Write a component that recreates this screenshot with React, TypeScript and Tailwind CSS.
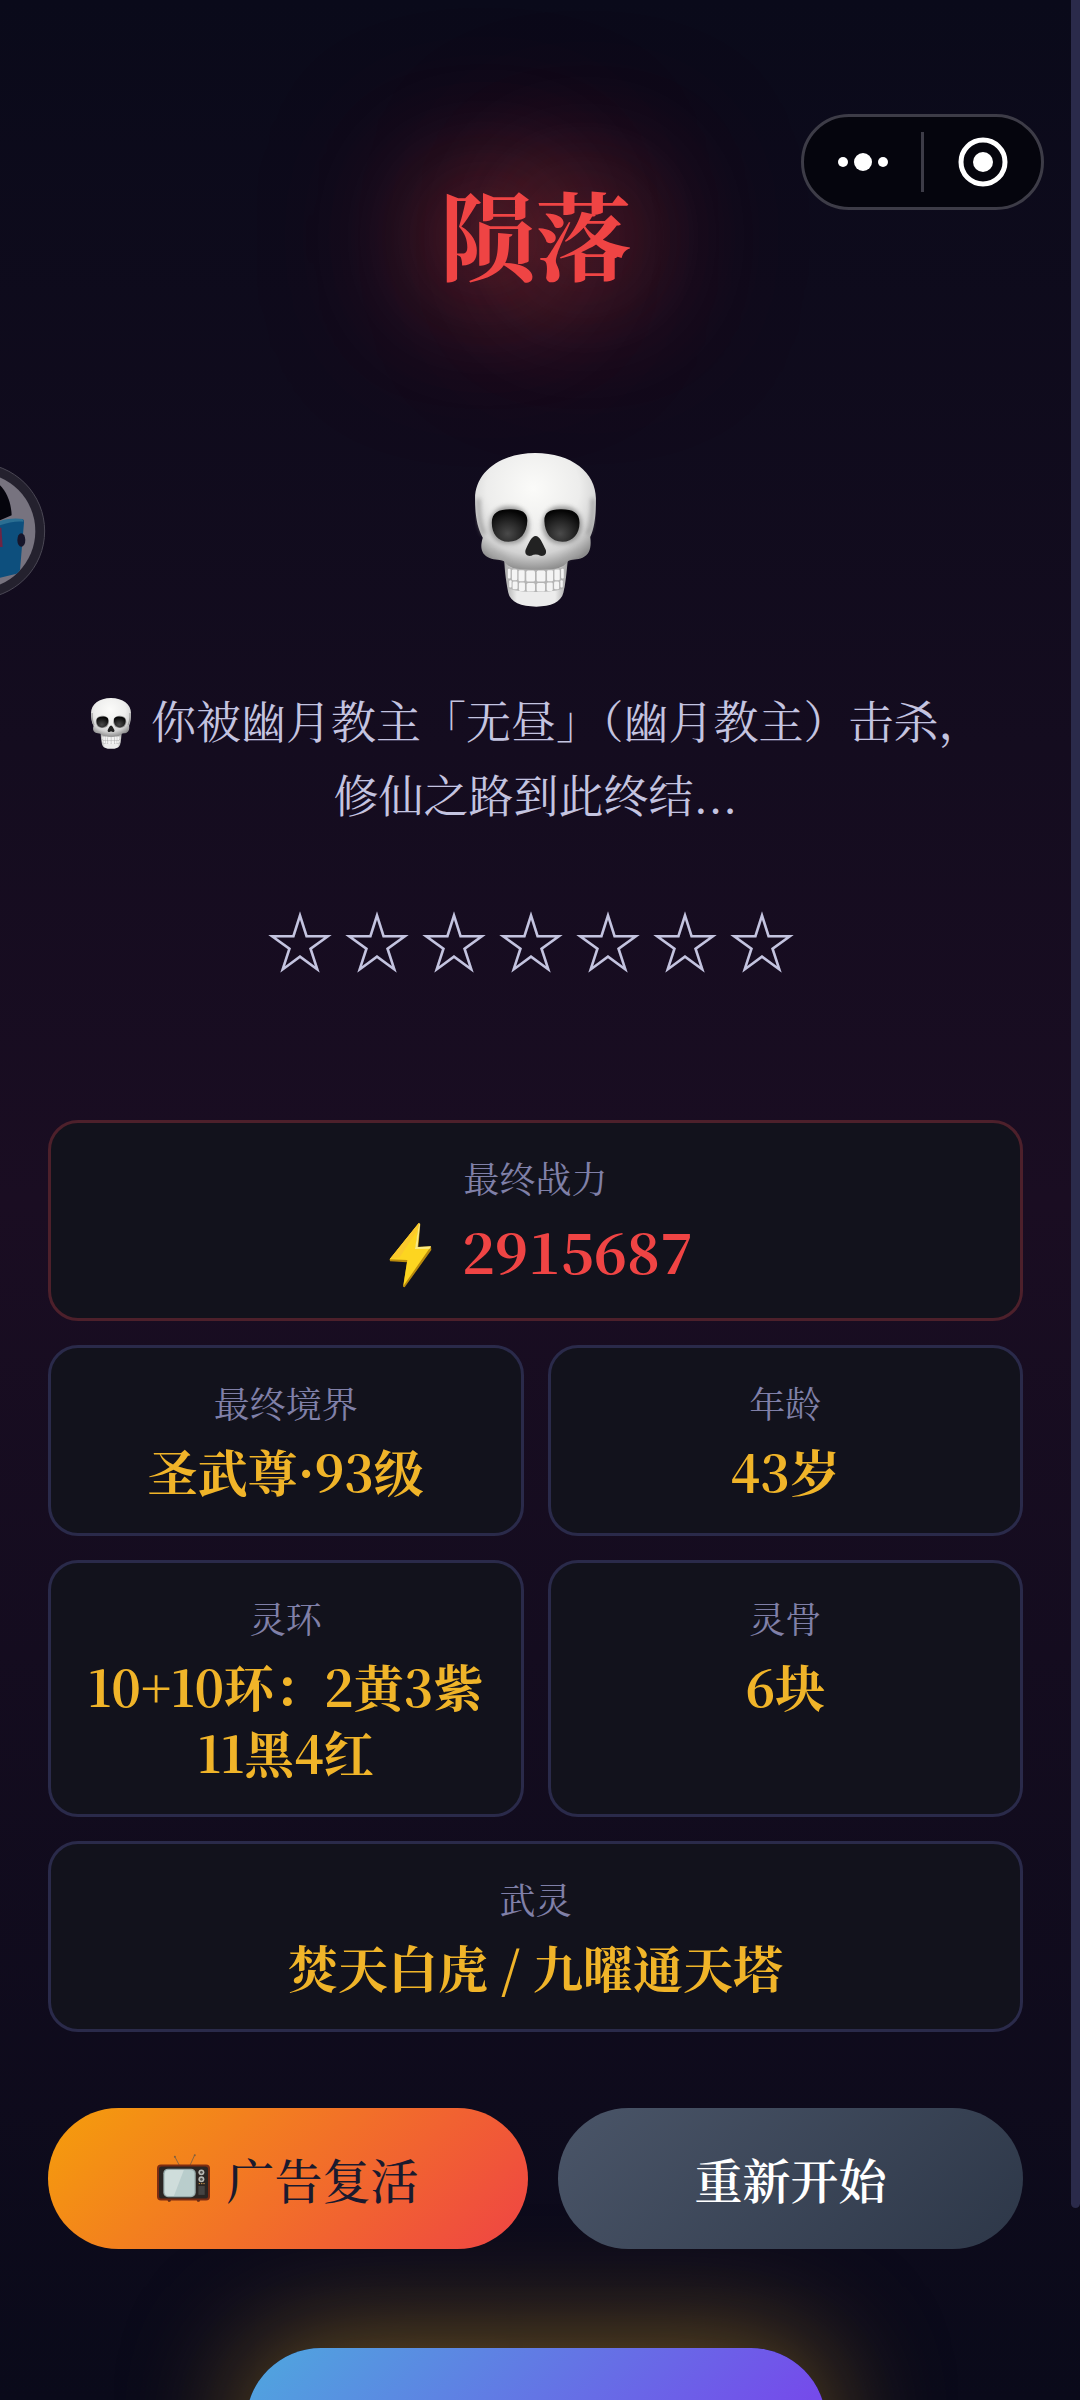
import React, { useId } from "react";

interface StatCardProps {
  label: string;
  children: React.ReactNode;
  wide?: boolean;
}

const STARS = 7;

function Skull({ className }: { className: string }) {
  const id = useId();

  return (
    <svg className={className} viewBox="107 69 361 460" aria-hidden="true">
      <defs>
        <radialGradient id={`${id}-bone`} cx="0.48" cy="0.3" r="0.7">
          <stop offset="0" stopColor="#fbfbf9" />
          <stop offset="0.55" stopColor="#ededec" />
          <stop offset="0.8" stopColor="#d2d2d2" />
          <stop offset="1" stopColor="#8c8c8c" />
        </radialGradient>
        <linearGradient id={`${id}-jaw`} x1="0" x2="1">
          <stop offset="0" stopColor="#a5a5a5" />
          <stop offset="0.2" stopColor="#ececec" />
          <stop offset="0.8" stopColor="#ececec" />
          <stop offset="1" stopColor="#a0a0a0" />
        </linearGradient>
        <radialGradient id={`${id}-eye`} cx="0.45" cy="0.75" r="0.7">
          <stop offset="0" stopColor="#4a4a4a" />
          <stop offset="0.5" stopColor="#292929" />
          <stop offset="1" stopColor="#050505" />
        </radialGradient>
        <filter id={`${id}-soft`} x="-20%" y="-20%" width="140%" height="140%">
          <feGaussianBlur stdDeviation="7" />
        </filter>
      </defs>
      <path
        d="M194 388 C196 430 200 455 206 486 C212 515 245 528 290 528 C333 528 364 515 371 486 C378 455 380 430 384 388 Z"
        fill={`url(#${id}-jaw)`}
      />
      <path
        d="M287 69 C395 69 468 128 468 205 C468 250 465 290 451 320 C455 350 450 372 428 382 C412 389 396 386 384 392 C372 412 340 422 290 422 C240 422 206 412 194 392 C176 386 160 390 144 380 C124 368 122 348 130 322 C112 290 107 250 107 205 C107 128 180 69 287 69 Z"
        fill={`url(#${id}-bone)`}
      />
      <path d="M117 205 C116 255 122 288 134 312 M459 205 C460 255 455 288 442 312" fill="none" stroke="#8d8d8d" strokeWidth="12" opacity="0.7" filter={`url(#${id}-soft)`} />
      <path d="M152 362 C180 378 194 374 204 395 M424 362 C396 378 382 374 372 395" fill="none" stroke="#a6a6a6" strokeWidth="8" opacity="0.6" filter={`url(#${id}-soft)`} />
      <g fill="#888888" filter={`url(#${id}-soft)`} opacity="0.8">
        <rect x="151" y="228" width="118" height="112" rx="52" />
        <rect x="308" y="228" width="118" height="112" rx="52" />
      </g>
      <path d="M210 237 C245 236 264 246 263 272 C262 308 242 334 207 334 C174 334 157 309 157 277 C157 247 178 237 210 237 Z" fill={`url(#${id}-eye)`} />
      <path d="M366 237 C398 237 419 247 419 277 C419 309 400 334 368 334 C334 334 315 308 314 272 C313 246 331 236 366 237 Z" fill={`url(#${id}-eye)`} />
      <path d="M288 317 C300 317 308 338 318 358 C322 371 314 378 302 376 C294 371 283 371 275 376 C263 378 254 371 258 358 C267 338 276 317 288 317 Z" fill="#222222" />
      {/* two rows of teeth */}
      <path
        d="M203 408 C230 421 346 421 376 408 L373 472 C345 488 233 488 206 472 Z"
        fill="#b4b4b4"
      />
      <g fill="#f4f4f4">
        <rect x="205" y="415" width="8" height="29" rx="3" />
        <rect x="217" y="417" width="16" height="32" rx="4" />
        <rect x="237" y="419" width="18" height="33" rx="4" />
        <rect x="260" y="420" width="26" height="33" rx="5" />
        <rect x="291" y="420" width="26" height="33" rx="5" />
        <rect x="322" y="419" width="18" height="33" rx="4" />
        <rect x="344" y="417" width="16" height="32" rx="4" />
        <rect x="364" y="415" width="8" height="29" rx="3" />
        <rect x="209" y="449" width="7" height="22" rx="3" />
        <rect x="219" y="453" width="15" height="23" rx="4" />
        <rect x="238" y="456" width="18" height="25" rx="4" />
        <rect x="261" y="457" width="25" height="26" rx="5" />
        <rect x="291" y="457" width="25" height="26" rx="5" />
        <rect x="321" y="456" width="18" height="25" rx="4" />
        <rect x="343" y="453" width="15" height="23" rx="4" />
        <rect x="362" y="449" width="7" height="22" rx="3" />
      </g>
    </svg>
  );
}

function Bolt() {
  return (
    <svg className="w-[66px] h-[66px]" viewBox="27 66 198 198" aria-hidden="true">
      <path d="M150 68 L62 178 L63 184 L114 187 L102 260 L107 262 L187 150 L186 139 L148 141 L154 72 Z" fill="#b98a0c" />
      <path d="M150 68 L62 178 L115 180 L103 258 L185 140 L140 143 Z" fill="#fdd520" />
      <path d="M150 68 L153 74 L146 141 L186 139 L182 146 L138 147 Z" fill="#f9ea86" />
      <path d="M150 68 L62 178 L92 172 L144 92 Z" fill="#fbc92c" />
    </svg>
  );
}

function Television() {
  return (
    <svg className="w-[53px] h-[48px]" viewBox="57 84 160 144" aria-hidden="true">
      <path d="M124 117 L111 92 M157 117 L171 86" stroke="#8a6540" strokeWidth="3" fill="none" />
      <circle cx="111" cy="92" r="3" fill="#80603f" />
      <circle cx="171" cy="87" r="3" fill="#80603f" />
      <path d="M88 221 h12 l-3 7 h-6 Z M176 221 h12 l-3 7 h-6 Z" fill="#5f2a16" />
      <rect x="57" y="115" width="160" height="109" rx="12" fill="#7c2c12" />
      <rect x="63" y="121" width="148" height="97" rx="8" fill="#2a2523" />
      <rect x="76" y="128" width="98" height="86" rx="14" fill="#98abab" />
      <rect x="80" y="132" width="90" height="78" rx="12" fill="#b9cdcc" />
      <path d="M92 132 H138 L108 210 H92 C84 210 80 205 80 198 V144 C80 137 84 132 92 132 Z" fill="#cfdddb" />
      <circle cx="191" cy="139" r="9" fill="#b8b8b3" />
      <circle cx="191" cy="139" r="4" fill="#4d4b49" />
      <circle cx="191" cy="160" r="9" fill="#b8b8b3" />
      <circle cx="191" cy="160" r="4" fill="#4d4b49" />
      <path d="M183 173 h4 M190 173 h4 M197 173 h4" stroke="#d39a4d" strokeWidth="3" />
      <rect x="182" y="180" width="19" height="27" fill="#454342" />
    </svg>
  );
}

function StatCard({ label, children, wide }: StatCardProps) {
  return (
    <div
      className={`rounded-[30px] border-[3px] border-[#2a2a4a] bg-[#12121c] px-6 py-[30px] text-center ${
        wide ? "col-span-2" : ""
      }`}
    >
      <dt className="mb-[9px] text-[36px] leading-[50px] text-[#8080a8]">{label}</dt>
      <dd className="text-[50px] leading-[66px] font-bold text-[#f0b429]">{children}</dd>
    </div>
  );
}

export default function App() {
  return (
    <div className="relative flex h-screen overflow-hidden bg-linear-to-b from-[#0a0a1a] via-[#1a0d22] to-[#0a0a1a] font-['Noto_Serif_CJK_SC','Noto_Sans_CJK_SC',serif]">
      <main className="min-w-0 flex-1 px-12 pt-[162px]">
        <h1 className="text-center text-[96px] leading-[140px] font-bold text-[#ef4444] [text-shadow:0_0_120px_rgba(239,68,68,0.9),0_0_180px_rgba(239,68,68,0.9)]">
          陨落
        </h1>

        <Skull className="mx-auto mt-[151px] h-[154px] w-[121px]" />

        <p className="mt-[76px] px-6 text-center text-[45px] leading-[73px] text-[#c4c4e0]">
          <Skull className="mr-2 mb-2 ml-1 inline-block h-[51px] w-10 align-middle" /> 你被幽月教主「无昼」（幽月教主）击杀，
          <br />
          修仙之路到此终结...
        </p>

        <div className="mt-[59px] flex justify-center gap-[9px] pr-[9px] text-[68px] leading-[100px] text-[#c4c4e0]">
          {Array.from({ length: STARS }, (_, i) => (
            <span key={i}>☆</span>
          ))}
        </div>

        {/* 结算数据 */}
        <dl className="mt-[131px] grid grid-cols-2 gap-6">
          <div className="col-span-2 rounded-[30px] border-[3px] border-[#4d202b] bg-[#12121c] px-6 py-[30px] text-center">
            <dt className="mb-[9px] text-[36px] leading-[50px] text-[#8080a8]">最终战力</dt>
            <dd className="flex items-end justify-center gap-[18px] text-[56px] leading-[76px] font-bold text-[#ef4444]">
              <Bolt />
              2915687
            </dd>
          </div>
          <StatCard label="最终境界">圣武尊·93级</StatCard>
          <StatCard label="年龄">43岁</StatCard>
          <StatCard label="灵环">10+10环：2黄3紫11黑4红</StatCard>
          <StatCard label="灵骨">6块</StatCard>
          <StatCard label="武灵" wide>
            焚天白虎 / 九曜通天塔
          </StatCard>
        </dl>

        {/* 操作按钮 */}
        <div className="mt-[76px] grid grid-cols-[32fr_31fr] gap-[30px] text-[48px] leading-[69px] font-medium">
          <button
            type="button"
            className="flex cursor-pointer items-center justify-center gap-4 rounded-full bg-[linear-gradient(135deg,#f59e0b,#ef4444)] py-9 text-[#1a1a2e]"
          >
            <Television />
            广告复活
          </button>
          <button
            type="button"
            className="cursor-pointer rounded-full bg-[linear-gradient(135deg,#4a5568,#2d3748)] py-9 font-semibold text-white"
          >
            重新开始
          </button>
        </div>

        <button
          type="button"
          aria-label="分享"
          className="mx-auto mt-[99px] block h-[150px] w-[580px] cursor-pointer rounded-full bg-[linear-gradient(135deg,#4ea8de,#7c3aed)] shadow-[0_0_120px_rgba(240,180,41,0.5)]"
        />
      </main>

      {/* 滚动条 */}
      <div className="w-[9px] shrink-0">
        <div className="h-[92%] rounded-b-full bg-[#2a2a4a]" />
      </div>

      {/* 悬浮头像 */}
      <svg className="absolute top-[463px] left-0 h-[136px] w-[46px]" viewBox="0 98 138 408" aria-hidden="true">
        <defs>
          <clipPath id="avatar-face">
            <circle cx="-69" cy="302" r="175" />
          </clipPath>
        </defs>
        <circle cx="-69" cy="302" r="203" fill="#24212e" stroke="#4a4754" strokeWidth="3" />
        <circle cx="-69" cy="302" r="175" fill="#77737f" />
        <g clipPath="url(#avatar-face)">
          <path d="M0 165 C20 185 33 215 35 255 L0 270 Z" fill="#05040c" />
          <path d="M0 278 C25 268 48 265 68 266 Q72 267 72 276 L60 420 Q60 427 50 430 L0 442 Z" fill="#0d4f7d" />
          <path d="M0 272 C25 264 48 263 68 266 L70 274 C48 272 25 276 0 285 Z" fill="#2a6e92" />
          <path d="M0 292 H4 L8 350 H0 Z" fill="#6e2444" />
          <ellipse cx="64" cy="329" rx="12" ry="20" fill="#17152a" />
        </g>
      </svg>

      {/* 小程序胶囊按钮 */}
      <div className="absolute top-[114px] right-9 flex h-24 w-[243px] items-center rounded-full border-[3px] border-[#3d3c47] bg-[#05050d]">
        <button type="button" aria-label="更多" className="flex h-full flex-1 cursor-pointer items-center justify-center">
          <svg className="h-[18px] w-[50px]" viewBox="0 0 50 18" fill="white">
            <circle cx="5" cy="9" r="5" />
            <circle cx="25" cy="9" r="9" />
            <circle cx="45" cy="9" r="5" />
          </svg>
        </button>
        <span className="h-[60px] w-[3px] bg-[#3d3c47]" />
        <button type="button" aria-label="关闭" className="flex h-full flex-1 cursor-pointer items-center justify-center">
          <svg className="h-[50px] w-[50px]" viewBox="0 0 50 50">
            <circle cx="25" cy="25" r="22" fill="none" stroke="white" strokeWidth="5" />
            <circle cx="25" cy="25" r="10" fill="white" />
          </svg>
        </button>
      </div>
    </div>
  );
}
